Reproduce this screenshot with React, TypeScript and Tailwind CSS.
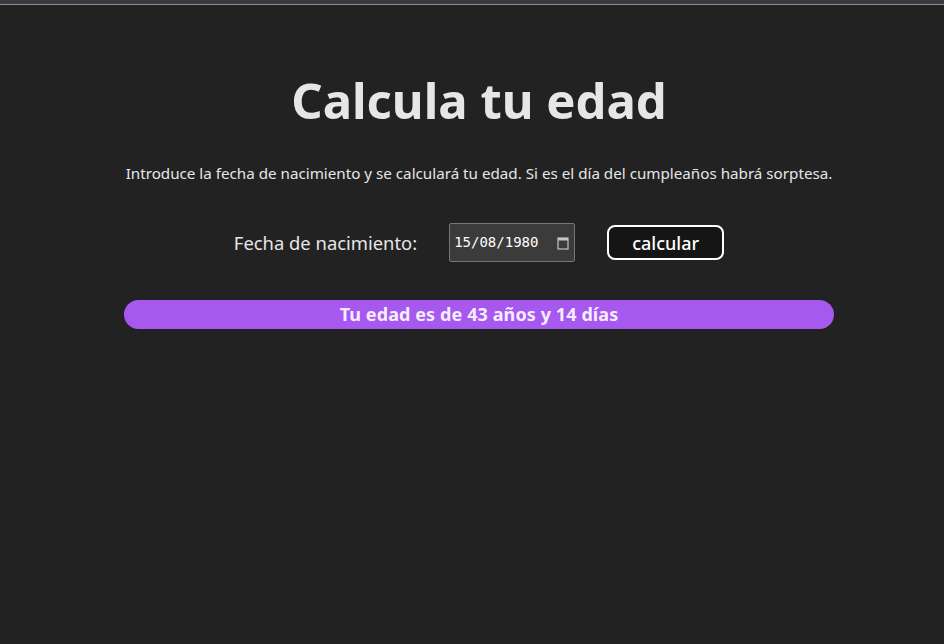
import React from "react";

export default function App() {
  return (
    <div className="min-h-[644px] w-full bg-[#222222] flex flex-col" style={{ fontFamily: '"Noto Sans", "Open Sans", sans-serif' }}>
      <div className="h-[4px] bg-[#393a40]" />
      <div className="h-[1px] bg-[#8c8c8c]" />
      <div className="flex justify-center pl-[14px]">
        <div className="w-[710px] flex flex-col items-center">
          <h1 className="mt-[65px] text-[49px] leading-[60px] font-bold text-[#e6e6e6]">
            Calcula tu edad
          </h1>
          <p className="mt-[33px] text-[15.2px] leading-[20px] text-[#e6e6e6] whitespace-nowrap">
            Introduce la fecha de nacimiento y se calculará tu edad. Si es el día del cumpleaños habrá sorptesa.
          </p>
          <div className="mt-[40px] flex items-center gap-[32px]">
            <label className="text-[18.4px] text-[#e6e6e6]">Fecha de nacimiento:</label>
            <div className="w-[126px] h-[39px] bg-[#3b3b3b] border border-[#767676] rounded-[2px] flex items-center justify-between pl-[4px] pr-[5px]">
              <span className="text-[14px] text-white" style={{ fontFamily: '"DejaVu Sans Mono", monospace' }}>
                15/08/1980
              </span>
              <svg width="12" height="14" viewBox="0 0 12 14" className="text-[#c4c4c4]">
                <rect x="1" y="2" width="10" height="11" fill="none" stroke="currentColor" strokeWidth="1.2" />
                <rect x="1" y="2" width="10" height="2.5" fill="currentColor" />
              </svg>
            </div>
            <button className="w-[117px] h-[35px] rounded-[8px] border-2 border-white bg-[#151515] text-white text-[18px] font-medium leading-none">
              calcular
            </button>
          </div>
          <div className="mt-[38px] w-full h-[29px] rounded-full bg-[#a658ef] flex items-center justify-center">
            <span className="text-[18px] font-bold text-[#f5edff] tracking-[0.1px]">Tu edad es de 43 años y 14 días</span>
          </div>
        </div>
      </div>
    </div>
  );
}
